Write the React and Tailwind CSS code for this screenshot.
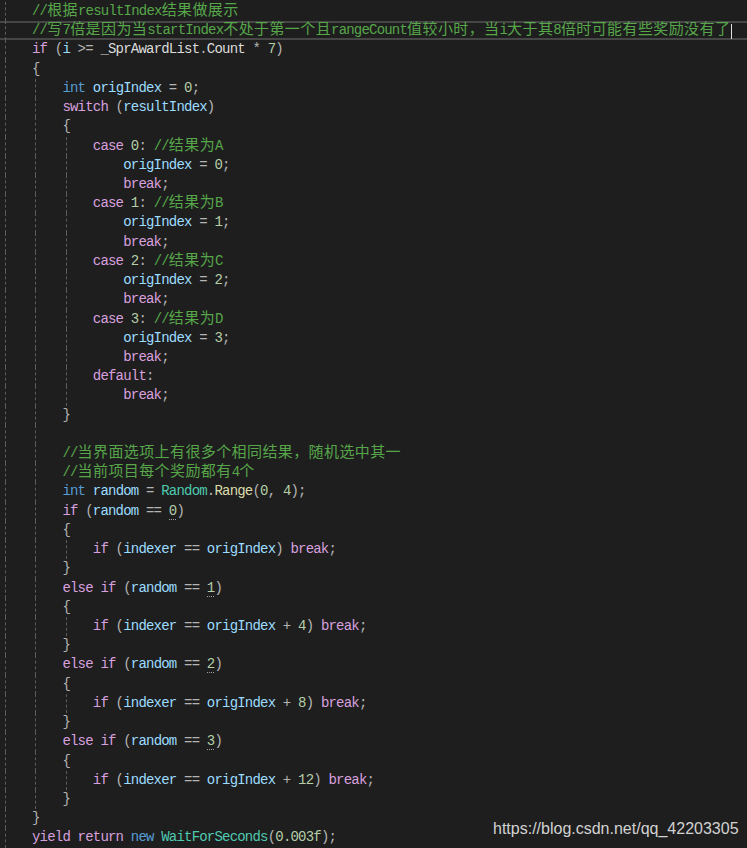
import React from "react";

// token colours (VS dark theme)
const COLORS = {
  cm: "text-[#57a64a]",
  kw: "text-[#569cd6]",
  ct: "text-[#d8a0df]",
  id: "text-[#9cdcfe]",
  nm: "text-[#b5cea8]",
  nmd: "text-[#b5cea8] border-b border-dotted border-[#a0a0a0]",
  ty: "text-[#4ec9b0]",
  fn: "text-[#dcdcaa]",
  pl: "text-[#dcdcdc]",
  op: "text-[#b4b4b4]",
};

const GUIDE_POS = {
  5: "left-[5px]",
  35: "left-[35px]",
  66: "left-[66px]",
};

const I1 = "    ";
const I2 = "        ";
const I3 = "            ";

const caseBlock = (n, letter) => [
  [I2, ["ct", "case"], ["op", " "], ["nm", n], ["op", ": "], ["cm", "//结果为" + letter]],
  [I3, ["id", "origIndex"], ["op", " = "], ["nm", n], ["op", ";"]],
  [I3, ["ct", "break"], ["op", ";"]],
];

const elseIf = (n, plus) => [
  [I1, ["ct", "else if"], ["op", " ("], ["id", "random"], ["op", " == "], ["nmd", n], ["op", ")"]],
  [I1, ["op", "{"]],
  [I2, ["ct", "if"], ["op", " ("], ["id", "indexer"], ["op", " == "], ["id", "origIndex"], ["op", " + "], ["nm", plus], ["op", ") "], ["ct", "break"], ["op", ";"]],
  [I1, ["op", "}"]],
];

const lines = [
  ["", ["cm", "//根据resultIndex结果做展示"]],
  ["", ["cm", "//写7倍是因为当startIndex不处于第一个且rangeCount值较小时，当i大于其8倍时可能有些奖励没有了"]],
  ["", ["ct", "if"], ["op", " ("], ["id", "i"], ["op", " >= "], ["pl", "_SprAwardList"], ["op", "."], ["pl", "Count"], ["op", " * "], ["nm", "7"], ["op", ")"]],
  ["", ["op", "{"]],
  [I1, ["kw", "int"], ["op", " "], ["id", "origIndex"], ["op", " = "], ["nm", "0"], ["op", ";"]],
  [I1, ["ct", "switch"], ["op", " ("], ["id", "resultIndex"], ["op", ")"]],
  [I1, ["op", "{"]],
  ...caseBlock("0", "A"),
  ...caseBlock("1", "B"),
  ...caseBlock("2", "C"),
  ...caseBlock("3", "D"),
  [I2, ["ct", "default"], ["op", ":"]],
  [I3, ["ct", "break"], ["op", ";"]],
  [I1, ["op", "}"]],
  [""],
  [I1, ["cm", "//当界面选项上有很多个相同结果，随机选中其一"]],
  [I1, ["cm", "//当前项目每个奖励都有4个"]],
  [I1, ["kw", "int"], ["op", " "], ["id", "random"], ["op", " = "], ["ty", "Random"], ["op", "."], ["fn", "Range"], ["op", "("], ["nm", "0"], ["op", ", "], ["nm", "4"], ["op", ");"]],
  [I1, ["ct", "if"], ["op", " ("], ["id", "random"], ["op", " == "], ["nmd", "0"], ["op", ")"]],
  [I1, ["op", "{"]],
  [I2, ["ct", "if"], ["op", " ("], ["id", "indexer"], ["op", " == "], ["id", "origIndex"], ["op", ") "], ["ct", "break"], ["op", ";"]],
  [I1, ["op", "}"]],
  ...elseIf("1", "4"),
  ...elseIf("2", "8"),
  ...elseIf("3", "12"),
  ["", ["op", "}"]],
  ["", ["ct", "yield return"], ["op", " "], ["kw", "new"], ["op", " "], ["ty", "WaitForSeconds"], ["op", "("], ["nm", "0.003f"], ["op", ");"]],
];

// which indent guides show on a line (1-based)
const guidesFor = (n) => {
  const g = [5];
  if (n >= 5 && n <= 42) g.push(35);
  if ((n >= 8 && n <= 21) || n === 29 || n === 33 || n === 37 || n === 41) g.push(66);
  return g;
};

const withCjk = (text) =>
  text.split(/([\u3000-\u9fff\uff00-\uffef]+)/).map((part, i) =>
    /[\u3000-\u9fff\uff00-\uffef]/.test(part) ? (
      <span key={i} className="text-[15px] tracking-[0.4px]">
        {part}
      </span>
    ) : (
      part
    )
  );

const CodeLine = ({ line, n }) => {
  const [indent, ...tokens] = line;
  const active = n === 2;
  return (
    <div
      className={
        "relative h-[19.23px] leading-[19.23px] pl-[32px] whitespace-pre " +
        (active ? "shadow-[inset_0_2px_0_#464646,inset_0_-2px_0_#464646]" : "")
      }
    >
      {guidesFor(n).map((x) => (
        <span
          key={x}
          className={"absolute top-0 bottom-0 border-l border-dashed border-[#5c5c5c] " + GUIDE_POS[x]}
        />
      ))}
      {indent}
      {tokens.map(([kind, text], i) => (
        <span key={i} className={COLORS[kind]}>
          {withCjk(text)}
        </span>
      ))}
      {active && <span className="absolute left-[731px] top-[3px] h-[15px] w-px bg-[#e0e0e0]" />}
    </div>
  );
};

export default function App() {
  return (
    <div className="relative w-[747px] h-[848px] overflow-hidden bg-[#1e1e1e]">
      <div className="pt-[2px] font-['Liberation_Mono','Noto_Sans_CJK_SC',monospace] text-[14px] tracking-[-0.8px]">
        {lines.map((line, i) => (
          <CodeLine key={i} line={line} n={i + 1} />
        ))}
      </div>
      <div className="absolute left-[493px] top-[820px] leading-[18px] text-[16px] text-[#d2d2d2] font-['Liberation_Sans',Arial,sans-serif]">
        https://blog.csdn.net/qq_42203305
      </div>
    </div>
  );
}
